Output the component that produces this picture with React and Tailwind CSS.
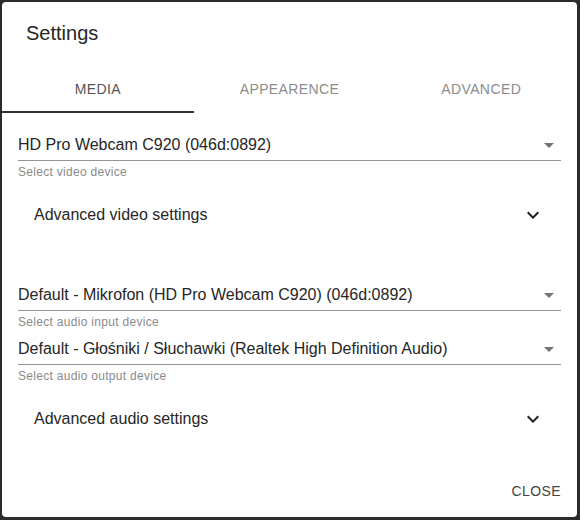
import React, { useState } from 'react';

const ArrowDrop = () => (
  <svg viewBox="0 0 24 24" className="w-6 h-6 -my-[3px] fill-[#757575] shrink-0">
    <path d="M7 10l5 5 5-5z" />
  </svg>
);

const ExpandMore = () => (
  <svg viewBox="0 0 24 24" className="w-6 h-6 fill-[#1f1f1f] shrink-0">
    <path d="M16.59 8.59L12 13.17 7.41 8.59 6 10l6 6 6-6z" />
  </svg>
);

const DeviceSelect = ({ value, helper, className = '' }) => (
  <div className={className}>
    <div className="flex items-center justify-between border-b border-[#949494] pt-[1px] pb-[6px]">
      <span className="text-[16px] leading-[19px] text-[#262626] truncate">{value}</span>
      <ArrowDrop />
    </div>
    <p className="mt-[4px] text-[12px] leading-[14px] tracking-[0.3px] text-[#8a8a8a]">{helper}</p>
  </div>
);

const AccordionRow = ({ label, className = '' }) => (
  <div className={`h-12 px-4 flex items-center justify-between ${className}`}>
    <span className="text-[16px] text-[#262626]">{label}</span>
    <ExpandMore />
  </div>
);

const App = () => {
  const [tab, setTab] = useState(0);
  const tabs = ['Media', 'Appearence', 'Advanced'];

  return (
    <div
      className="w-[580px] h-[520px] bg-[#2b2b2b] pt-[2px] pl-[2px] pr-[3px] pb-[3px] flex"
      style={{ fontFamily: '"Liberation Sans", Arial, sans-serif' }}
    >
      <div className="flex-1 bg-white rounded-[4px] flex flex-col">
        {/* header */}
        <h2 className="px-6 pt-[19px] text-[20px] leading-[24px] text-[#262626]">Settings</h2>

        {/* tabs */}
        <div className="mt-5 flex">
          {tabs.map((t, i) => (
            <button
              key={t}
              onClick={() => setTab(i)}
              className={`flex-1 h-12 pt-[2px] flex items-center justify-center text-[14px] uppercase tracking-[0.4px] border-b-2 ${
                tab === i ? 'border-[#333] text-[#555]' : 'border-transparent text-[#8c8c8c]'
              }`}
            >
              {t}
            </button>
          ))}
        </div>

        {/* content */}
        <div className="px-4">
          <DeviceSelect className="mt-[21px]" value="HD Pro Webcam C920 (046d:0892)" helper="Select video device" />
          <AccordionRow className="mt-[12px]" label="Advanced video settings" />
          <DeviceSelect
            className="mt-[45px]"
            value="Default - Mikrofon (HD Pro Webcam C920) (046d:0892)"
            helper="Select audio input device"
          />
          <DeviceSelect
            className="mt-[9px]"
            value="Default - Głośniki / Słuchawki (Realtek High Definition Audio)"
            helper="Select audio output device"
          />
          <AccordionRow className="mt-[12px]" label="Advanced audio settings" />
        </div>

        {/* actions */}
        <div className="mt-auto p-2 flex justify-end">
          <button className="px-2 h-9 text-[14px] uppercase tracking-[0.4px] text-[#444]">Close</button>
        </div>
      </div>
    </div>
  );
};

export default App;
